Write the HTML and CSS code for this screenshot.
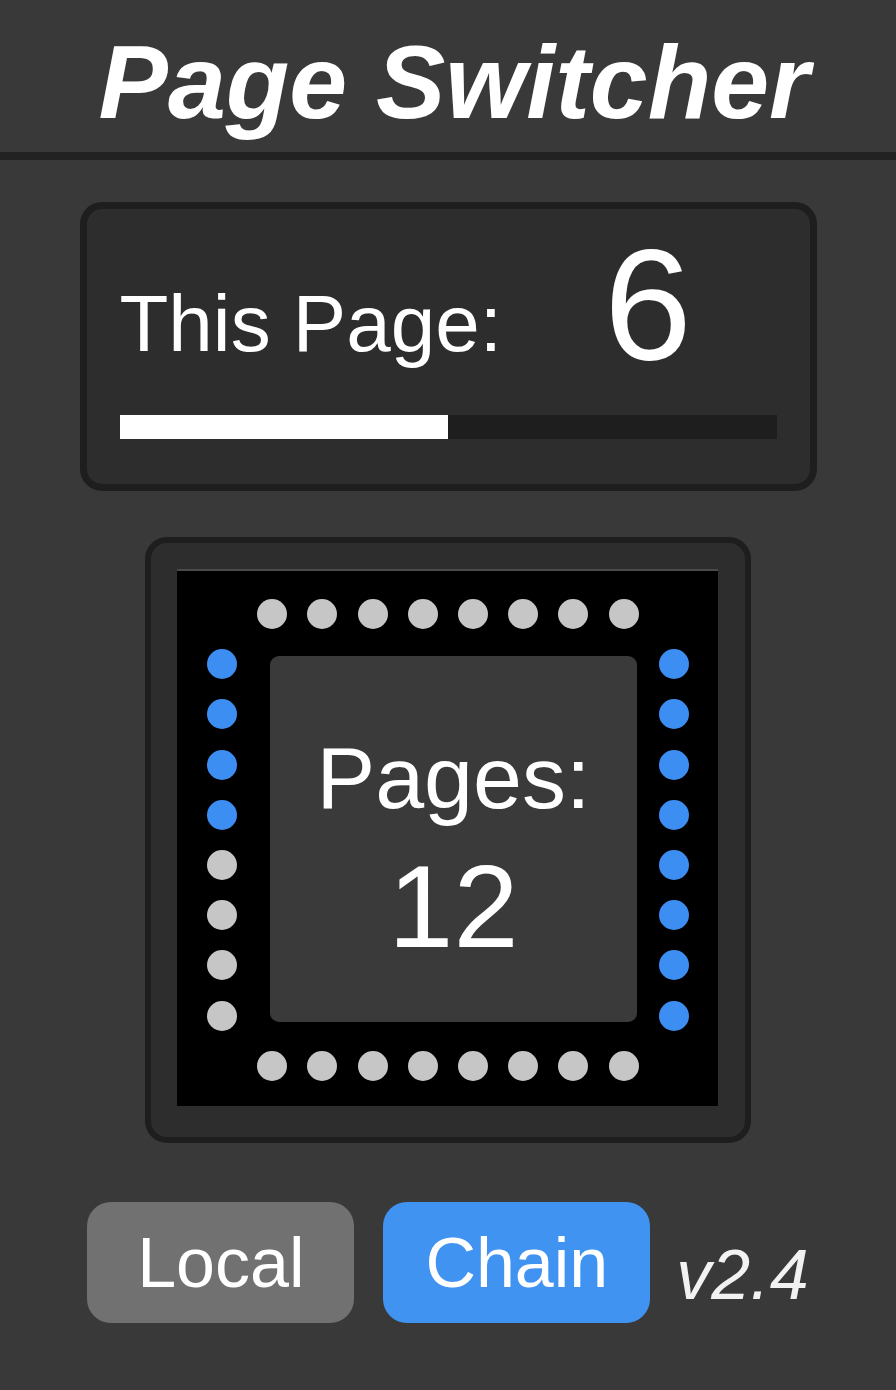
FILE: index.html
```html
<!DOCTYPE html>
<html lang="en">
<head>
    <meta charset="UTF-8">
    <meta name="viewport" content="width=device-width, initial-scale=1.0">
    <title>Page Switcher</title>
    <link rel="stylesheet" href="styles.css">
</head>
<body>

    <header>
        <h1>Page Switcher</h1>
    </header>

    <div class="container">

        <!-- Current page -->
        <div class="page-card">
            <div class="page-row">
                <span class="page-label">This Page:</span>
                <span class="page-number">6</span>
            </div>
            <div class="progress">
                <div class="progress-fill" style="width: 50%"></div>
            </div>
        </div>

        <!-- Page ring -->
        <div class="ring-card">
            <div class="ring" id="ring">
                <div class="ring-center">
                    <span class="ring-label">Pages:</span>
                    <span class="ring-count">12</span>
                </div>
            </div>
        </div>

        <!-- Mode buttons -->
        <div class="mode-row">
            <button class="mode-btn local">Local</button>
            <button class="mode-btn chain">Chain</button>
            <span class="version">v2.4</span>
        </div>
    </div>

    <script>
        // dots around the ring: top, left, right, bottom
        const ring = document.getElementById('ring');
        const leftOn = 4;
        const rightOn = 8;

        function addDot(col, row, on) {
            const dot = document.createElement('span');
            dot.classList.add('dot');
            if (on) dot.classList.add('on');
            dot.style.gridColumn = col;
            dot.style.gridRow = row;
            ring.appendChild(dot);
        }

        for (let i = 0; i < 8; i++) {
            addDot(i + 2, 1, false);
            addDot(1, i + 2, i < leftOn);
            addDot(10, i + 2, i < rightOn);
            addDot(i + 2, 10, false);
        }
    </script>
</body>
</html>
```

FILE: styles.css
```css
body {
    font-family: 'Liberation Sans', Arial, sans-serif;
    margin: 0;
    padding: 0;
    background-color: #393939;
    color: #fff;
}

header {
    height: 160px;
    box-sizing: border-box;
    padding-top: 30px;
    padding-left: 12px;
    border-bottom: 8px solid #222;
    text-align: center;
}

header h1 {
    margin: 0;
    font-size: 104px;
    line-height: 1;
    font-weight: bold;
    font-style: italic;
}

.container {
    display: flex;
    flex-direction: column;
    align-items: center;
}

.page-card {
    width: 737px;
    height: 289px;
    box-sizing: border-box;
    margin-top: 42px;
    padding: 16px 33px 0 33px;
    background-color: #2d2d2d;
    border: 7px solid #1e1e1e;
    border-radius: 22px;
}

.page-row {
    display: flex;
    align-items: flex-start;
    height: 160px;
}

.page-label {
    margin-top: 59px;
    font-size: 80px;
    line-height: 1;
}

.page-number {
    margin-left: 102px;
    font-size: 158px;
    line-height: 1;
}

.progress {
    height: 24px;
    margin-top: 30px;
    background-color: #1e1e1e;
}

.progress-fill {
    height: 100%;
    background-color: #fff;
}

.ring-card {
    width: 606px;
    height: 606px;
    box-sizing: border-box;
    margin-top: 46px;
    padding: 26px 27px 0 26px;
    background-color: #2d2d2d;
    border: 6px solid #1e1e1e;
    border-radius: 22px;
}

.ring {
    display: grid;
    grid-template-columns: repeat(10, 50.2px);
    grid-template-rows: repeat(10, 50.2px);
    justify-items: center;
    align-items: center;
    width: 541px;
    height: 537px;
    box-sizing: border-box;
    padding: 18px 20px 0 20px;
    background-color: #000;
    border-top: 2px solid #4a4a4a;
}

.dot {
    width: 30px;
    height: 30px;
    border-radius: 50%;
    background-color: #c6c6c6;
}

.dot.on {
    background-color: #3d8ef2;
}

.ring-center {
    grid-column: 2 / 10;
    grid-row: 2 / 10;
    align-self: stretch;
    justify-self: stretch;
    margin: 17px 12px 19px 23px;
    padding-top: 78px;
    display: flex;
    flex-direction: column;
    align-items: center;
    background-color: #3a3a3a;
    border-radius: 9px;
}

.ring-label {
    font-size: 88px;
    line-height: 1;
}

.ring-count {
    margin-top: 26px;
    font-size: 117px;
    line-height: 1;
}

.mode-row {
    display: flex;
    align-items: center;
    margin-top: 59px;
}

.mode-btn {
    width: 267px;
    height: 121px;
    border: none;
    border-radius: 24px;
    color: #fff;
    font-family: 'Liberation Sans', Arial, sans-serif;
    font-size: 70px;
    padding: 0;
}

.mode-btn.local {
    background-color: #717171;
}

.mode-btn.chain {
    margin-left: 29px;
    background-color: #4193f2;
}

.version {
    margin-left: 26px;
    margin-top: 24px;
    font-size: 70px;
    line-height: 1;
    font-style: italic;
    color: #f2f2f2;
}
```
